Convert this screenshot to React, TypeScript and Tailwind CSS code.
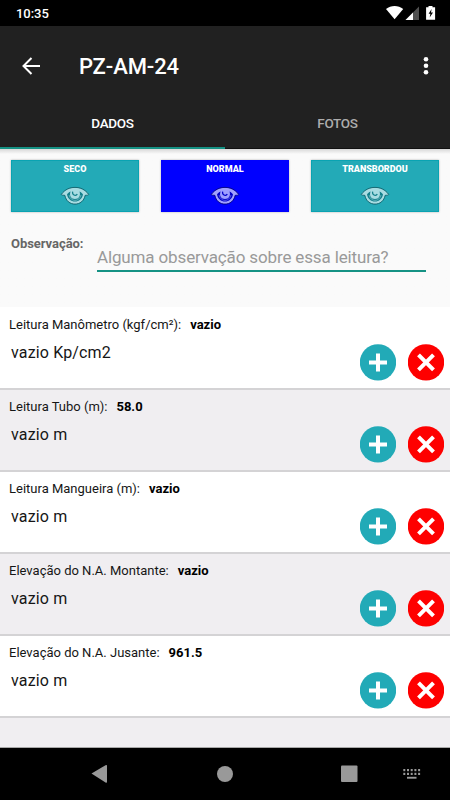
import React from "react";

type Reading = { label: string; last: string; value: string };

const readings: Reading[] = [
  { label: "Leitura Manômetro (kgf/cm²):", last: "vazio", value: "vazio Kp/cm2" },
  { label: "Leitura Tubo (m):", last: "58.0", value: "vazio m" },
  { label: "Leitura Mangueira (m):", last: "vazio", value: "vazio m" },
  { label: "Elevação do N.A. Montante:", last: "vazio", value: "vazio m" },
  { label: "Elevação do N.A. Jusante:", last: "961.5", value: "vazio m" },
];

const states = [
  { label: "SECO", active: false },
  { label: "NORMAL", active: true },
  { label: "TRANSBORDOU", active: false },
];

function EyeIcon({ active }: { active: boolean }) {
  const fill = active ? "#9f9fff" : "#a8dce2";
  const line = active ? "#000078" : "#0d5d68";
  const iris = active ? "#0000c8" : "#127f8b";
  return (
    <svg width="30" height="20" viewBox="0 0 30 20" fill="none">
      <path
        d="M1.3 8.4C5 3.5 9.5 1.4 15 1.4s10 2.1 13.7 7c-.3 1-2 .8-3.500.9C24 15 20 18.100 15 18.100S6 15 4.800 9.300C3.300 9.200 1.600 9.400 1.300 8.400Z"
        fill={fill}
        stroke={line}
        strokeWidth="0.9"
      />
      <path
        d="M7 8.600C7.900 7.200 9 6.300 10.600 5.600c-1.600 4 .4 7.500 4.400 7.500 3.900 0 5.900-3.400 4.500-7.500 1.500.6 2.600 1.500 3.500 3-.9 4.300-3.900 7-8 7s-7.100-2.700-8-7Z"
        fill={iris}
      />
      <path d="M9 9c.9 3.500 3.200 5.400 6 5.400s5.100-1.900 6-5.400" stroke={fill} strokeWidth="0.5" />
      <path d="M12.600 5.700c-.3 2.300.9 3.700 2.700 3.600 1-.1 1.600-.6 1.900-1.400" stroke={iris} strokeWidth="1.3" />
    </svg>
  );
}

function StatusBar() {
  return (
    <div className="flex h-[26px] items-center justify-between bg-black pl-4 pr-4 text-[13px] font-medium text-white">
      <span className="pt-px tracking-[-0.05px]">10:35</span>
      <svg width="50" height="16" viewBox="0 0 50 16" className="-mr-0.5">
        <path d="M0 4C5-.1 12.200-.1 17.200 4L8.600 14.300Z" fill="#fff" />
        <path d="M33 1.500v13.500H19.500Z" fill="#505050" />
        <path d="M27 7.500v7.500h-7.500Z" fill="#fff" />
        <path d="M42.500 1h4v1.200h2.600v12.600h-9V2.200h2.400Z" fill="#fff" />
        <path d="m45.600 4-3 4.700h1.800l-.7 3.800 3.300-5h-2Z" fill="#000" />
      </svg>
    </div>
  );
}

function AppBar() {
  return (
    <header className="h-[123px] bg-[#212121] text-white">
      <div className="flex h-20 items-center pl-[22px] pr-5">
        <svg width="18" height="18" viewBox="0 0 18 18" fill="none" stroke="#fff" strokeWidth="2">
          <path d="M18 9H1.500M9.500 1l-8 8 8 8" />
        </svg>
        <h1 className="ml-[39px] text-[22px] font-medium tracking-[-0.1px]">PZ-AM-24</h1>
        <svg width="6" height="20" viewBox="0 0 6 20" fill="#fff" className="ml-auto mr-[1px]">
          <circle cx="3" cy="3.200" r="2.300" />
          <circle cx="3" cy="9.700" r="2.300" />
          <circle cx="3" cy="16.200" r="2.300" />
        </svg>
      </div>
      <nav className="grid h-[43px] grid-cols-2 text-center text-[13.5px] font-medium leading-5 tracking-[-0.3px]">
        <div className="border-b-2 border-[#159284] pt-[7px]">DADOS</div>
        <div className="border-b border-[#111] pt-[7px] text-[#adadad]">FOTOS</div>
      </nav>
    </header>
  );
}

function ReadingRow({ item, shaded }: { item: Reading; shaded: boolean }) {
  return (
    <li className={`relative h-[82px] border-b-2 border-[#d4d3d5] ${shaded ? "bg-[#f0eef1]" : "bg-white"}`}>
      <div className="flex gap-[9px] pl-[9px] pt-[8px] text-[13px] leading-[18px] text-[#161616]">
        <span>{item.label}</span>
        <b className="text-black">{item.last}</b>
      </div>
      <p className="pl-[11px] pt-[7px] text-[16px] leading-6 tracking-[0.15px] text-[#161616]">{item.value}</p>
      <div className="absolute right-[6px] top-[36px] flex gap-3">
        <svg width="36" height="37" viewBox="0 0 36 37">
          <circle cx="18" cy="18.400" r="18.200" fill="#22aab7" />
          <path d="M18 9.400v18M9 18.400h18" stroke="#fff" strokeWidth="4" />
        </svg>
        <svg width="36" height="37" viewBox="0 0 36 37">
          <circle cx="18" cy="18.400" r="18.200" fill="#fe0000" />
          <path d="m10.500 10.900 15 15M25.500 10.900l-15 15" stroke="#fff" strokeWidth="4" />
        </svg>
      </div>
    </li>
  );
}

function NavigationBar() {
  return (
    <div className="h-[52px] bg-black">
      <svg width="450" height="52" viewBox="0 0 450 52" fill="#999">
        <path d="M91.500 25.500 105.500 17.300q1.500-.8 1.500.5v16q0 1.500-1.500.6Z" />
        <circle cx="225" cy="26" r="8" />
        <rect x="341" y="17.500" width="16.500" height="16.500" rx="1" />
        {[0, 1, 2, 3, 4].map((i) => (
          <g key={i}>
            <rect x={403.3 + i * 3.7} y="21" width="2" height="2.200" />
            <rect x={403.3 + i * 3.7} y="24.800" width="2" height="2.200" />
          </g>
        ))}
        <rect x="407" y="28.800" width="9.500" height="1.900" />
      </svg>
    </div>
  );
}

export default function App() {
  return (
    <div className="flex h-[800px] w-[450px] flex-col overflow-hidden bg-[#fafafa] font-['Roboto',sans-serif]">
      <StatusBar />
      <AppBar />
      <section className="h-[158px] bg-linear-to-b from-[#d8d8d8] to-[#fafafa] to-[5px] pt-[11px]">
        <div className="grid grid-cols-3 gap-[22px] px-[11px]">
          {states.map((s) => (
            <button
              key={s.label}
              className={`flex h-[52px] flex-col items-center border pt-[1px] text-[9px] font-black leading-[14px] text-white shadow-[0_0_2px_rgba(0,0,0,0.3)] ${
                s.active ? "border-[#0000ff] bg-[#0000ff]" : "border-[#0aa3b2] bg-[#23aab7]"
              }`}
            >
              {s.label}
              <span className="mt-[10px]">
                <EyeIcon active={s.active} />
              </span>
            </button>
          ))}
        </div>
        <div className="flex pl-[11px] pr-6">
          <label className="w-[86px] pt-[23px] text-[13px] font-bold leading-[18px] tracking-[-0.05px] text-[#666]">
            Observação:
          </label>
          <div className="mt-[30px] h-[30px] flex-1 border-b-2 border-[#159284] text-[17px] leading-[30px] tracking-[-0.14px] text-[#999]">
            Alguma observação sobre essa leitura?
          </div>
        </div>
      </section>
      <ul className="border-t border-white">
        {readings.map((item, i) => (
          <ReadingRow key={item.label} item={item} shaded={i % 2 === 1} />
        ))}
      </ul>
      <div className="flex-1 border-b border-[#a8a8a8] bg-[#f0eef1]" />
      <NavigationBar />
    </div>
  );
}
